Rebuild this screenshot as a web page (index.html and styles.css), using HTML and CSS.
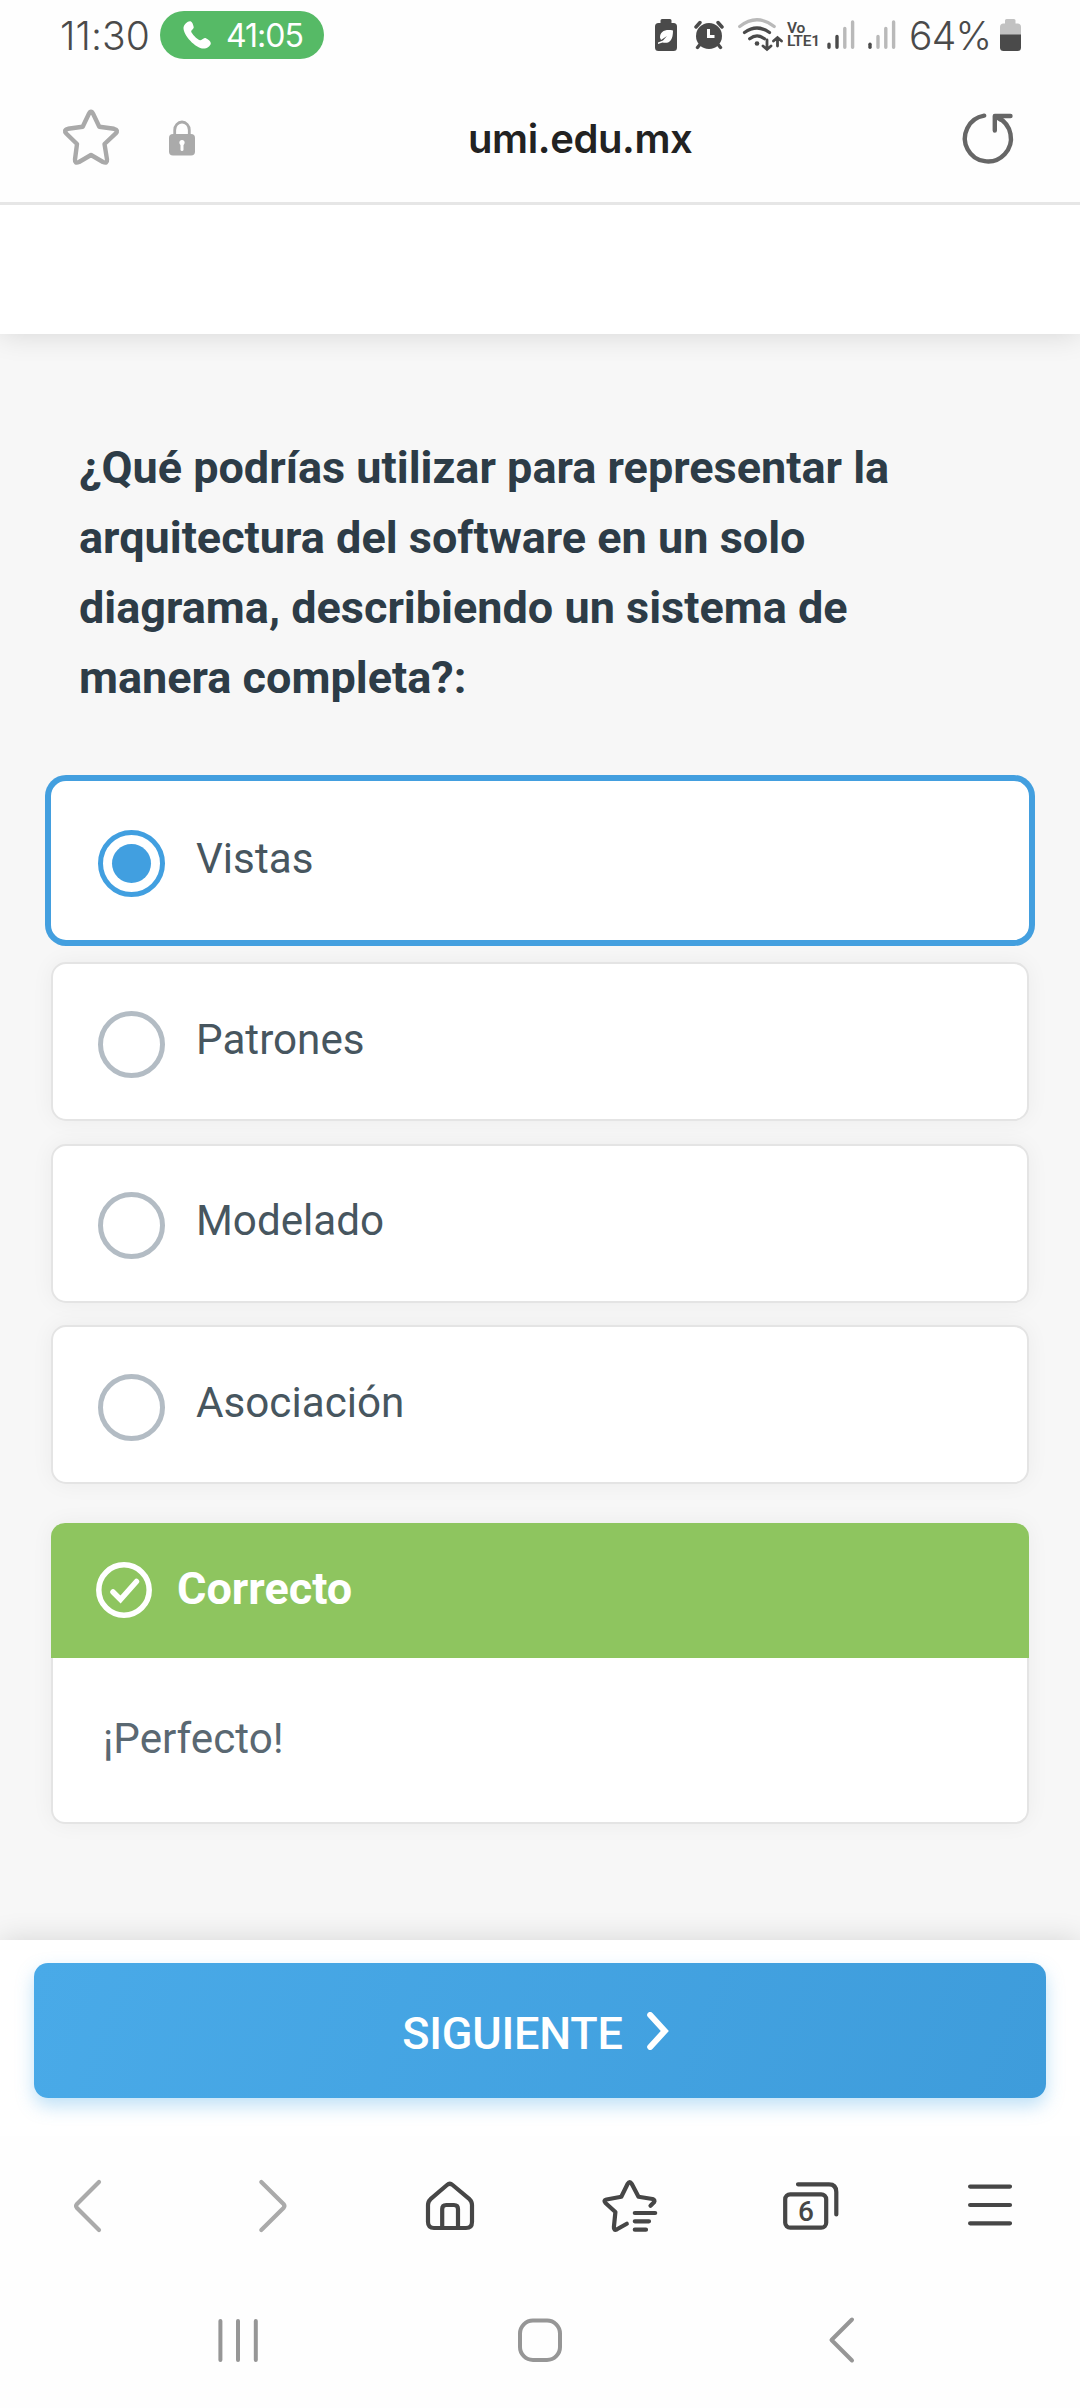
FILE: index.html
```html
<!DOCTYPE html>
<html lang="es">
<head>
<meta charset="utf-8">
<title>umi.edu.mx</title>
<link rel="stylesheet" href="styles.css">
</head>
<body>
<div class="screen">
  <div class="status-bar">
    <span class="clock">11:30</span>
    <span class="call-pill">
      <svg class="phone" width="30" height="30" viewBox="0 0 30 30"><path d="M8.500 1.200C6 .6 2 4 1.500 7.500C1 15 13.500 28.500 21.500 28.600C25 28.600 28.500 26 28.800 23.500C29 21.500 26.500 19.500 23.500 18C21.500 17.200 19.500 20.600 18 20.300C15 19.500 9.500 13.500 9.200 11.500C9 10 12 9 11.700 7C11.300 4.500 10 1.600 8.500 1.200Z"/></svg>
      <span class="call-time">41:05</span>
    </span>
    <div class="status-icons">
      <svg class="ic-saver" width="22" height="70" viewBox="0 0 22 70"><path class="fill-dark" d="M7 19H15Q16.500 19 16.500 20.500V23H18.500Q22 23 22 26.500V47.500Q22 51 18.500 51H3.500Q0 51 0 47.500V26.500Q0 23 3.500 23H5.500V20.500Q5.500 19 7 19Z"/><path class="fill-white" d="M18 30.500C10 29 5 31.500 5 37.500L6 40L12 36L8 40.500L3 42.500V44L7.500 42.500C14 44 18 41 18 30.500Z"/></svg>
      <svg class="ic-alarm" width="30" height="70" viewBox="0 0 30 70"><circle class="fill-dark" cx="15" cy="36" r="13"/><path class="line-dark" d="M2 27L6 22.500M24 22.500L28 27M5.500 45L3.500 47.500M24.500 45L26.500 47.500" stroke-width="3.400"/><path d="M14.500 29V36.500H20.500" fill="none" stroke="#fff" stroke-width="3"/></svg>
      <svg class="ic-wifi" width="46" height="70" viewBox="0 0 46 70"><g fill="none" stroke-linecap="round" stroke-width="3.200"><path stroke="#b9b9b9" d="M1.700 26.500Q19 13 36.200 26.500"/><path stroke="#4a4a4a" d="M6.500 32.500Q19 23.500 31.500 32.500M11.700 38.800Q19 33 26.500 38.800"/><path stroke="#4a4a4a" stroke-width="2.800" d="M29 40V49M25 46L29 49.500L33 46M39.500 46V38M35.500 41L39.500 37.500L43.500 41"/></g><circle class="fill-dark" cx="19" cy="43.500" r="2.300"/></svg>
      <span class="volte">Vo<br>LTE1</span>
      <svg class="ic-signal" width="28" height="70" viewBox="0 0 28 70"><g stroke-width="3.400" stroke-linecap="round" fill="none"><path stroke="#4a4a4a" d="M2 44.200V47.200M10 36.500V47.200"/><path stroke="#b9b9b9" d="M17.800 28.500V47.200M25.600 22V47.200"/></g></svg>
      <svg class="ic-signal-two" width="28" height="70" viewBox="0 0 28 70"><g stroke-width="3.400" stroke-linecap="round" fill="none"><path stroke="#4a4a4a" d="M2 44.200V47.200"/><path stroke="#b9b9b9" d="M10 36.500V47.200M17.800 28.500V47.200M25.600 22V47.200"/></g></svg>
      <span class="battery-level">64%</span>
      <svg class="ic-battery" width="21" height="70" viewBox="0 0 21 70"><path fill="#c2c2c2" d="M6.500 19H14Q15.500 19 15.500 20.500V23.500H17.500Q21 23.500 21 27V35H0V27Q0 23.500 3.500 23.500H5V20.500Q5 19 6.500 19Z"/><path class="fill-dark" d="M0 34.500H21V47.500Q21 51 17.500 51H3.500Q0 51 0 47.500Z"/></svg>
    </div>
  </div>

  <div class="address-bar">
    <svg class="star" width="60" height="60" viewBox="0 0 60 60"><path d="M27.800 6Q30 1.500 32.200 6L38.300 18.700L53 20.800Q58 22 54.500 25.700L43.500 36L46 51.500Q46.500 56 42 54L30 47L18 54Q13.500 56 14 51.500L16 36L5.500 25.700Q2 22 7 20.800L21.700 18.700Z"/></svg>
    <svg class="lock" width="26" height="36" viewBox="0 0 26 36"><path d="M5.700 16V10A7.300 8 0 0 1 20.300 10V16" fill="none" stroke="#aaa" stroke-width="2.800"/><rect y="14" width="26" height="21.500" rx="4" fill="#aaa"/><path d="M13 22V29.500" stroke="#fff" stroke-width="3" stroke-linecap="round"/><circle cx="13" cy="22.500" r="2.600" fill="#fff"/></svg>
    <span class="url">umi.edu.mx</span>
    <svg class="reload" width="60" height="60" viewBox="0 0 60 60"><path d="M25.200 7.700A23 23 0 1 0 38.500 9.500M35.800 22.500V8H51.500M36.500 8.500L42 12"/></svg>
  </div>

  <header class="site-header"></header>

  <main class="quiz">
    <h1 class="question">¿Qué podrías utilizar para representar la arquitectura del software en un solo diagrama, describiendo un sistema de manera completa?:</h1>
    <ul class="options">
      <li class="option selected"><span class="radio"></span><span class="label">Vistas</span></li>
      <li class="option"><span class="radio"></span><span class="label">Patrones</span></li>
      <li class="option"><span class="radio"></span><span class="label">Modelado</span></li>
      <li class="option"><span class="radio"></span><span class="label">Asociación</span></li>
    </ul>
    <section class="feedback">
      <div class="feedback-head">
        <svg width="56" height="56" viewBox="0 0 56 56"><circle cx="28" cy="28" r="25.200"/><path d="M17 30L24.500 37.500L40.500 19.500"/></svg>
        <span>Correcto</span>
      </div>
      <p class="feedback-text">¡Perfecto!</p>
    </section>
  </main>

  <footer class="quiz-footer">
    <button class="next" type="button">
      <span>SIGUIENTE</span>
      <svg width="22" height="38" viewBox="0 0 22 38"><path d="M3.200 3L17.800 19L3.200 35"/></svg>
    </button>
  </footer>

  <nav class="browser-tools">
    <svg class="dim" viewBox="0 0 60 60"><path d="M39 6L17 28Q15.200 30 17 32L39 54"/></svg>
    <svg class="dim" viewBox="0 0 60 60"><path d="M21.300 6L43.500 28Q45.300 30 43.500 32L21.300 54"/></svg>
    <svg viewBox="0 0 60 60"><path d="M8 29Q8 25.500 10.500 23.200L27 9Q29.800 6.600 32.600 9L49.500 23.200Q52 25.500 52 29V46Q52 52 46 52H14Q8 52 8 46ZM22.200 52V33Q22.200 29 26.200 29H34Q38 29 38 33V52"/></svg>
    <svg viewBox="0 0 60 60"><path d="M26.800 47.700L17 53.300Q13.500 55 13.900 51L15.400 36L5.500 27Q3 24.500 6.500 23.500L21.300 20.700L27.700 7.800Q29.700 4.300 31.700 7.800L38.500 20.700L52.500 23Q55.500 24 54 26.300L50.500 29.800M34.800 37H55.200M34.800 45.300H49M34.800 53.700H46"/></svg>
    <svg viewBox="0 0 60 60"><rect x="5.200" y="18.300" width="41" height="33.400" rx="5"/><path d="M18 8.300H49Q56.300 8.300 56.300 16V38.500"/><text x="26" y="44.600">6</text></svg>
    <svg viewBox="0 0 60 60"><path d="M10.100 10.600H50M10.100 29H50M10.100 47.300H50"/></svg>
  </nav>

  <nav class="system-nav">
    <svg viewBox="0 0 60 60"><path d="M12.400 11V50M30 11V50M47.800 11V50"/></svg>
    <svg viewBox="0 0 60 60"><rect x="10" y="10.500" width="40" height="39.500" rx="13"/></svg>
    <svg viewBox="0 0 60 60"><path d="M40 9.500L19.500 30L40 50.500"/></svg>
  </nav>
</div>
</body>
</html>
```
FILE: styles.css
```css
* { box-sizing: border-box; margin: 0; padding: 0; }

body {
  width: 1080px;
  background: #fefefe;
  font-family: Roboto, "Liberation Sans", sans-serif;
}

svg { display: block; flex: none; }

.screen {
  display: flex;
  flex-direction: column;
  width: 1080px;
  height: 2408px;
  overflow: hidden;
  background: #fefefe;
}

/* Phone status bar */
.status-bar {
  display: flex;
  align-items: center;
  height: 70px;
  padding-left: 60px;
  color: #4a4a4a;
  font-family: Inter, sans-serif;
  white-space: nowrap;
}
.clock { width: 100px; font-size: 39px; font-weight: 350; letter-spacing: 0.1px; }
.call-pill {
  display: flex;
  align-items: center;
  width: 164px;
  height: 48px;
  padding-left: 22px;
  border-radius: 24px;
  background: #56ba66;
  color: #fff;
}
.phone { fill: #fff; }
.call-time { margin-left: 14px; font-size: 32px; font-weight: 400; letter-spacing: -1px; }
.status-icons { display: flex; align-items: center; margin-left: 331px; }
.fill-dark { fill: #4a4a4a; }
.fill-white { fill: #fff; }
.line-dark { fill: none; stroke: #4a4a4a; stroke-linecap: round; }
.ic-alarm { margin-left: 17px; }
.ic-wifi { margin-left: 14px; }
.volte {
  width: 40px;
  margin-left: 3px;
  font: 600 15.5px/13px Roboto, sans-serif;
  letter-spacing: -0.2px;
}
.ic-signal-two { margin-left: 13px; }
.battery-level { width: 91px; margin-left: 13px; font-size: 39px; font-weight: 350; letter-spacing: -0.8px; }

/* Browser address bar */
.address-bar {
  display: flex;
  align-items: center;
  height: 135px;
  padding: 4px 61px 0;
  border-bottom: 3px solid #e6e6e6;
}
.star { fill: none; stroke: #a9a9a9; stroke-width: 4.4; stroke-linejoin: round; }
.lock { margin-left: 48px; }
.url {
  flex: 1;
  padding: 2px 0 0 273px;
  color: #222;
  font: 600 40px/60px Inter, sans-serif;
  letter-spacing: -0.4px;
}
.reload { fill: none; stroke: #666; stroke-width: 4.4; stroke-linecap: round; stroke-linejoin: round; }

/* Site */
.site-header {
  position: relative;
  height: 129px;
  background: #fff;
  box-shadow: 0 0 28px rgba(0, 0, 0, 0.14);
  clip-path: inset(0 0 -40px 0);
}
.quiz { height: 1606px; padding: 99px 51px 0; background: #f7f7f7; }
.question {
  width: 900px;
  padding-left: 28px;
  color: #2d3c47;
  font-size: 45px;
  font-weight: 700;
  line-height: 70px;
}
.options { display: grid; gap: 22.5px; margin-top: 67.5px; list-style: none; }
.option {
  display: flex;
  align-items: center;
  height: 159px;
  padding: 5px 0 0 45px;
  border: 2px solid #e4e4e4;
  border-radius: 15px;
  background: #fff;
  box-shadow: 0 0 22px rgba(0, 0, 0, 0.05);
}
.option.selected { padding-top: 6px; border-color: #fff; box-shadow: 0 0 0 6px #439fdf; }
.radio {
  display: grid;
  place-items: center;
  width: 67px;
  height: 67px;
  border: 5px solid #b3bcc4;
  border-radius: 50%;
}
.selected .radio { border-width: 5.6px; border-color: #419fe0; }
.selected .radio::after {
  content: "";
  width: 39px;
  height: 39px;
  border-radius: 50%;
  background: #419fe0;
}
.label { margin: -9px 0 0 31px; color: #47565f; font-size: 42.2px; line-height: 56px; }
.selected .label { margin-top: -8px; }

.feedback {
  margin-top: 39px;
  border-radius: 14px;
  box-shadow: 0 0 22px rgba(0, 0, 0, 0.05);
}
.feedback-head {
  display: flex;
  align-items: center;
  height: 135px;
  padding: 0 0 2px 45px;
  border-radius: 14px 14px 0 0;
  background: #8ec55f;
  color: #fff;
  font-size: 45px;
  font-weight: 700;
}
.feedback-head span { margin: -3px 0 0 25px; }
.feedback-head svg, .next svg {
  fill: none;
  stroke: #fff;
  stroke-width: 5.5;
  stroke-linecap: round;
}
.feedback-text {
  height: 166px;
  padding: 51px 0 0 50px;
  border: 2px solid #e4e4e4;
  border-top: 0;
  border-radius: 0 0 14px 14px;
  background: #fff;
  color: #5a6872;
  font-size: 42.2px;
  line-height: 60px;
}

.quiz-footer {
  position: relative;
  height: 196px;
  padding: 23px 34px 0;
  background: #fff;
  box-shadow: 0 0 28px rgba(0, 0, 0, 0.14);
  clip-path: inset(-40px 0 0 0);
}
.next {
  display: flex;
  align-items: center;
  justify-content: center;
  width: 100%;
  height: 135px;
  padding-right: 9px;
  border: 0;
  border-radius: 14px;
  background: linear-gradient(110deg, #49aae8, #3e9cdb);
  box-shadow: 0 8px 18px rgba(72, 169, 232, 0.35);
  color: #fff;
  font: 500 45px/60px Roboto, sans-serif;
}
.next span { margin-top: 6px; letter-spacing: -0.2px; }
.next svg { margin-left: 24px; stroke-width: 6; }

/* Browser toolbar */
.browser-tools {
  display: grid;
  grid-template-columns: repeat(6, 180px);
  place-items: center;
  height: 140px;
}
.browser-tools svg, .system-nav svg {
  width: 60px;
  height: 60px;
  fill: none;
  stroke: #464646;
  stroke-width: 4.2;
  stroke-linecap: round;
  stroke-linejoin: round;
}
.browser-tools .dim { stroke: #aaa; }
.browser-tools text { fill: #464646; stroke: none; font: 500 28px Roboto, sans-serif; text-anchor: middle; }

/* Android navigation */
.system-nav {
  display: grid;
  grid-template-columns: repeat(3, 302px);
  justify-content: center;
  place-items: center;
  height: 128px;
}
.system-nav svg { stroke: #969696; stroke-width: 4; }
```
